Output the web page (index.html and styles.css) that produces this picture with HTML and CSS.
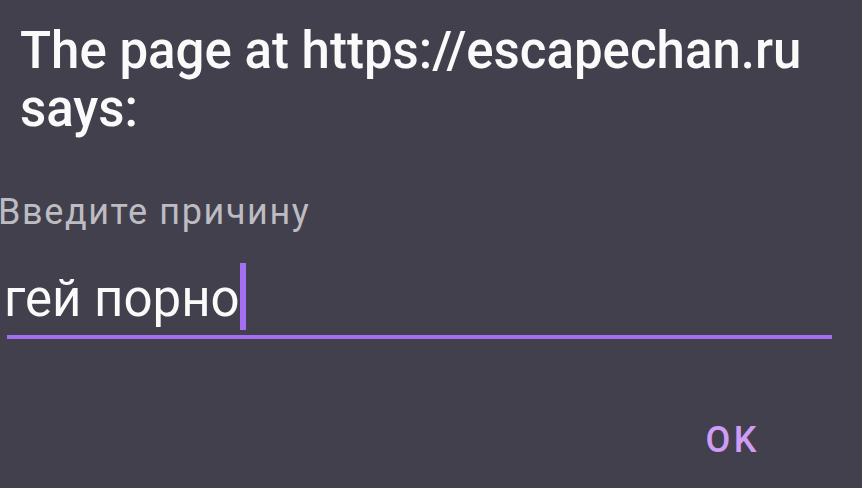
FILE: index.html
```html
<!DOCTYPE html>
<html lang="ru">
<head>
<meta charset="utf-8">
<title>Prompt</title>
<link rel="stylesheet" href="styles.css">
</head>
<body>
<div class="dialog">
  <h1 class="title">The page at https://escapechan.ru says:</h1>
  <div class="label">Введите причину</div>
  <div class="field">
    <span class="value">гей порно</span><span class="cursor"></span>
  </div>
  <div class="actions">
    <span class="btn">OK</span>
  </div>
</div>
</body>
</html>
```

FILE: styles.css
```css
html, body {
  margin: 0;
  padding: 0;
  background: #42404c;
  height: 488px;
  overflow: hidden;
}
.dialog {
  display: flex;
  flex-direction: column;
  font-family: Roboto, "Noto Sans", sans-serif;
  width: 862px;
  height: 488px;
  box-sizing: border-box;
  padding-top: 22px;
}
.title {
  margin: 0 0 0 20px;
  width: 820px;
  font-size: 51px;
  font-weight: 500;
  line-height: 58px;
  color: #fafafa;
}
.label {
  margin: 54px 0 0 -2px;
  font-size: 36px;
  line-height: 40px;
  letter-spacing: 1.6px;
  color: #bdbcc2;
  white-space: nowrap;
}
.field {
  display: flex;
  align-items: flex-start;
  margin: 32px 30px 0 7px;
  padding-bottom: 1px;
  border-bottom: 4px solid #a56ff2;
}
.value {
  margin-left: -3px;
  font-size: 51px;
  line-height: 70px;
  color: #fafafa;
}
.cursor {
  display: block;
  flex: 0 0 6px;
  width: 6px;
  height: 67px;
  margin-top: -1px;
  background: #a56ff2;
}
.actions {
  display: flex;
  justify-content: flex-end;
  margin-top: 80px;
  padding-right: 102px;
}
.btn {
  font-size: 36px;
  font-weight: 500;
  line-height: 42px;
  letter-spacing: 3.5px;
  color: #cf9cf6;
}
```
